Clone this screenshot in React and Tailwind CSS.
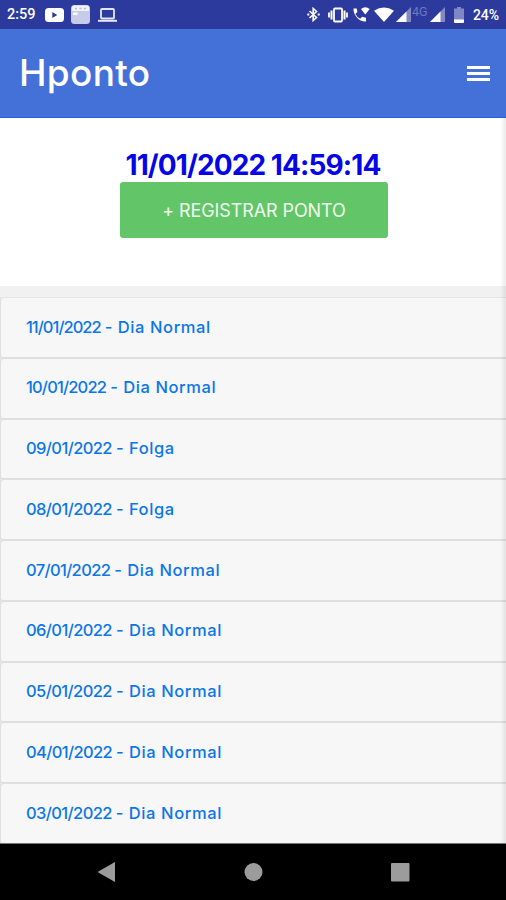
const days = [
  { date: '11/01/2022', label: 'Dia Normal', tracking: 'tracking-[-0.98px]' },
  { date: '10/01/2022', label: 'Dia Normal', tracking: 'tracking-[-0.82px]' },
  { date: '09/01/2022', label: 'Folga', tracking: 'tracking-[-0.6px]' },
  { date: '08/01/2022', label: 'Folga', tracking: 'tracking-[-0.6px]' },
  { date: '07/01/2022', label: 'Dia Normal', tracking: 'tracking-[-0.64px]' },
  { date: '06/01/2022', label: 'Dia Normal', tracking: 'tracking-[-0.6px]' },
  { date: '05/01/2022', label: 'Dia Normal', tracking: 'tracking-[-0.58px]' },
  { date: '04/01/2022', label: 'Dia Normal', tracking: 'tracking-[-0.63px]' },
  { date: '03/01/2022', label: 'Dia Normal', tracking: 'tracking-[-0.6px]' },
];

const SignalIcon = () => (
  <svg className="h-[15px] w-[15px]" viewBox="0 0 15 15">
    <path d="M0 15 15 0v15z" fill="#fff" fillOpacity="0.4" />
    <path d="M0 15 10.5 4.5V15z" fill="#fff" />
  </svg>
);

const StatusBar = () => {
  return (
    <div className="flex h-[29px] items-center justify-between bg-[#2d3a9d] pl-[7px] pr-[7px] text-white">
      <div className="flex items-center">
        <span className="w-[38px] pt-px font-[Roboto] text-[14.5px] font-medium">2:59</span>
        <svg className="h-[14px] w-[19px]" viewBox="0 0 19 14">
          <rect width="19" height="14" rx="3.5" fill="#fff" />
          <path d="M7.3 4v6l5-3z" fill="#2d3a9d" />
        </svg>
        <svg className="ml-[7px] h-[19px] w-[19px]" viewBox="0 0 19 19">
          <rect width="19" height="19" rx="3.5" fill="#c5cbe9" />
          <path d="M3 .5h13a2 2 0 0 1 2 2V6H1V2.5a2 2 0 0 1 2-2z" fill="#f1f3fb" />
          <path d="M4 3.5h2M8.5 3.5h2M13 3.5h2" stroke="#b5bce0" strokeWidth="1.5" />
          <path d="M2 7.5h4.5V10H2z" fill="#fff" />
        </svg>
        <svg className="ml-[8px] h-[14px] w-[19px]" viewBox="0 0 19 14">
          <rect x="3" y="1" width="13" height="9.5" rx="1" fill="none" stroke="#e3e6f5" strokeWidth="1.8" />
          <path d="M0 11.8h19v2H0z" fill="#e3e6f5" />
        </svg>
      </div>

      <div className="flex items-center">
        <svg className="h-[15px] w-[13px]" viewBox="0 0 13 15" fill="none" stroke="#fff" strokeWidth="1.6">
          <path d="m2.5 4 7 6.5-3.3 3v-12l3.3 3-7 6.5" />
          <path d="M.3 7.5h2M10.7 7.5h2" strokeWidth="1.8" />
        </svg>
        <svg className="ml-[8px] h-[16px] w-[20px]" viewBox="0 0 20 16" fill="none" stroke="#fff">
          <rect x="6" y="1.5" width="8" height="13" rx="1" strokeWidth="1.8" />
          <path d="M3.5 3.5v9M16.5 3.5v9" strokeWidth="2" />
          <path d="M1 5.5v5M19 5.5v5" strokeWidth="1.8" />
        </svg>
        <svg className="ml-[5px] h-[17px] w-[17px]" viewBox="0 0 17 16" fill="#fff">
          <path d="M.5 2h3.2l.7 3.6-2 1.8a11 11 0 0 0 4.8 4.9l1.9-2 3.9.9V15C6.5 15.5.2 9 .5 2z" />
          <path d="M8 2.5Q12.2-1 16.7 2.5L12.3 8z" />
        </svg>
        <svg className="ml-[4px] h-[15px] w-[20px]" viewBox="0 0 20 15" fill="#fff">
          <path d="M0 3.8Q10-3 20 3.8L10 15z" />
        </svg>
        <div className="ml-[2px] flex items-center">
          <SignalIcon />
          <span className="w-[19px] pb-[5px] pl-[1px] font-[Roboto] text-[12.5px] leading-none text-[#6f77bf]">4G</span>
          <SignalIcon />
        </div>
        <svg className="ml-[9px] h-[16px] w-[10px]" viewBox="0 0 10 16">
          <path d="M3 0h4v1.5h3V13H0V1.5h3z" fill="#7f87c5" />
          <path d="M0 12.5h10V15a1 1 0 0 1-1 1H1a1 1 0 0 1-1-1z" fill="#fff" />
        </svg>
        <span className="ml-[9px] w-[26px] whitespace-nowrap pt-px font-[Roboto] text-[14px] font-medium tracking-[-0.1px]">24%</span>
      </div>
    </div>
  );
};

const Header = () => {
  return (
    <header className="flex h-[89px] items-center justify-between border-b border-[#2163cf] bg-[#4471d8] pl-[19px] pr-[16px]">
      <h1 className="pb-[2px] text-[37px] font-medium leading-none tracking-[0.3px] text-white">Hponto</h1>
      <button className="flex w-[23px] flex-col gap-[3px]" aria-label="Menu">
        <span className="h-[3px] w-full bg-white" />
        <span className="h-[3px] w-full bg-white" />
        <span className="h-[3px] w-full bg-white" />
      </button>
    </header>
  );
};

const DayCard = ({ date, label, tracking }) => {
  return (
    <a
      href="#"
      className="flex h-[60.75px] shrink-0 items-center rounded-l-[4px] border-b-2 border-l-[1.5px] border-[#dfdfdf] bg-[#f7f7f7] pb-px pl-[25px] text-[16.5px] font-medium text-[#0b76e8]"
    >
      <span className={tracking}>{date}</span>
      <span className="ml-[4px] w-[13px]">-</span>
      <span className="tracking-[0.6px]">{label}</span>
    </a>
  );
};

const NavBar = () => {
  return (
    <nav className="h-[57px] border-t border-[#777] bg-black">
      <svg className="h-[56px] w-[506px]" viewBox="0 0 506 56" fill="#9c9c9c">
        <path d="M97.5 28 115 18v20z" />
        <circle cx="253.5" cy="28" r="9" />
        <rect x="391" y="19" width="18.5" height="18.5" rx="1" />
      </svg>
    </nav>
  );
};

export default function App() {
  return (
    <div className="flex h-[900px] w-[506px] flex-col overflow-hidden bg-white font-[Inter,sans-serif]">
      <StatusBar />
      <Header />
      <main className="relative flex h-[725px] flex-col overflow-hidden">
        <section className="flex h-[168px] shrink-0 flex-col items-center pt-[31px]">
          <p className="whitespace-nowrap text-[28px] font-bold leading-[33px] tracking-[-0.9px] text-[#0505e6]">
            11/01/2022 14:59:14
          </p>
          <button className="ml-[2px] h-[56px] w-[268px] rounded-[3px] bg-[#62c668] text-[18px] tracking-[-0.1px] text-[#f0fbf0]">
            + REGISTRAR PONTO
          </button>
        </section>
        <section className="flex flex-col bg-[#f1f1f1] pt-[11px]">
          <div className="flex flex-col border-t border-[#e5e5e5] bg-[#e5e5e5]">
            {days.map((day) => (
              <DayCard key={day.date} {...day} />
            ))}
          </div>
        </section>
        <div className="absolute right-0 top-0 h-full w-[6px] bg-gradient-to-r from-transparent to-black/8" />
      </main>
      <NavBar />
    </div>
  );
}
